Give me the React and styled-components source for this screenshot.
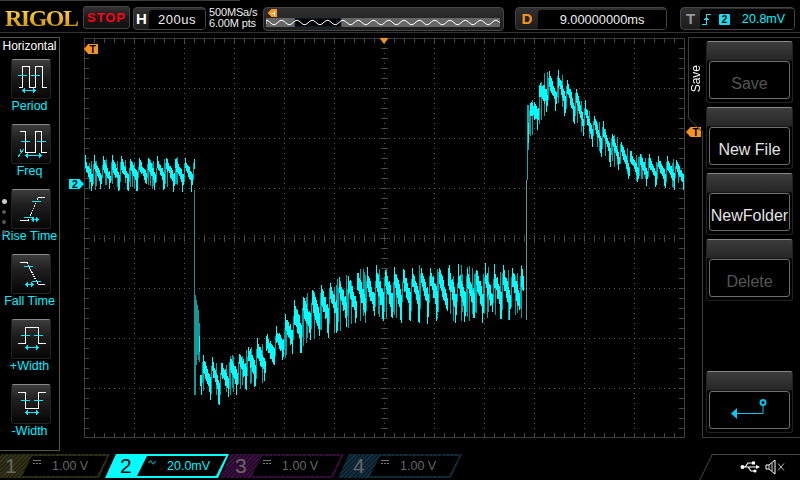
import React from "react";
import styled, { createGlobalStyle } from "styled-components";

const CYAN = "#00f0ff";
const ORANGE = "#f7941d";

const Global = createGlobalStyle`
  html, body { margin: 0; padding: 0; background: #000; }
  body { font-family: "Liberation Sans", Arial, sans-serif; }
`;

const Screen = styled.div`
  width: 800px; height: 480px; background: #000; overflow: hidden;
  display: flex; flex-direction: column; color: #fff;
`;

/* ---------- header ---------- */
const Header = styled.header`
  border-bottom: 1px solid #333; display: flex; align-items: flex-start; position: relative;
  padding-top: 7px; box-sizing: content-box; height: 25px; flex: none;
  &::before { content: ""; position: absolute; left: 0; top: 0; width: 240px; height: 1px; background: #3c3c3c; }
`;
const Logo = styled.div`
  width: 78px; margin-left: 5px; font: bold 24px/20px "Liberation Serif", serif; letter-spacing: -1.5px;
  background: linear-gradient(180deg, #ffd84a 0%, #eeb414 55%, #c49208 100%);
  -webkit-background-clip: text; background-clip: text; color: transparent; margin-top: 1px;
`;
const StopButton = styled.div`
  width: 47px; height: 23px; box-sizing: border-box; margin-top: -1px; border: 1px solid #444; border-radius: 3px;
  background: linear-gradient(180deg, #333 0%, #1a1a1a 50%, #111 100%);
  color: #ff0014; font: bold 13px/21px "Liberation Sans", sans-serif; letter-spacing: .9px; text-align: center;
`;
const Field = styled.div`
  height: 23px; box-sizing: border-box; width: ${p => p.$w}px; margin-left: ${p => p.$ml}px;
  border: 1px solid #444; border-radius: 4px; display: flex; overflow: hidden;
  background: linear-gradient(180deg, #303030 0%, #1c1c1c 100%);
`;
const FieldLetter = styled.span`
  width: ${p => p.$w}px; flex: none; text-align: center; color: ${p => p.$c};
  font: bold 15px/21px "Liberation Sans", sans-serif;
`;
const FieldValue = styled.div`
  flex: 1; background: #000; border-radius: 4px 0 0 0; margin-top: 2px; text-align: center; color: #eee;
  font: ${p => p.$fs || 13}px/20px "Liberation Sans", sans-serif; letter-spacing: ${p => p.$ls || 0}px;
`;
const Sample = styled.div`
  width: 49px; margin-left: 3px; font: 11px/11px "Liberation Sans", sans-serif; color: #eee; white-space: nowrap; letter-spacing: -.15px;
`;
const Timeline = styled.div`
  width: 241px; height: 24px; box-sizing: border-box; margin-left: 5px; border: 1px solid #444; border-radius: 4px;
  background: linear-gradient(180deg, #303030 0%, #1c1c1c 100%); padding: 1px 3px 0 2px; display: flex; flex-direction: column;
`;
const TimelineFlag = styled.svg` width: 10px; height: 8px; flex: none; margin-left: 1px; `;
const TimelineStrip = styled.svg` width: 234px; height: 9px; margin-top: 1px; flex: none; display: block; `;
const TriggerBody = styled.div`
  flex: 1; display: flex; align-items: center; background: #000; margin-top: 1px; border-radius: 4px 0 0 0; padding-left: 2px;
`;
const TriggerValue = styled.span`
  color: ${CYAN}; font: 12.5px/20px "Liberation Sans", sans-serif; margin-left: 12px;
`;
const SourceBadge = styled.span`
  width: 11px; height: 11px; background: #19dcf5; border-radius: 1px; color: #000; margin-left: 8px;
  font: bold 10px/11px "Liberation Sans", sans-serif; text-align: center;
`;

/* ---------- main ---------- */
const Main = styled.main` display: flex; flex: none; padding-top: 4px; box-sizing: border-box; height: 418px; `;

const LeftPanel = styled.aside`
  width: 60px; height: 414px; box-sizing: border-box; flex: none; border: 1px solid #555; border-left: 0;
  position: relative; display: flex; flex-direction: column; align-items: center; padding-left: 3px;
`;
const PanelTitle = styled.div` font: 12px/15px "Liberation Sans", sans-serif; color: #fff; margin-top: 1px; margin-left: -3px; height: 20px; white-space: nowrap;`;
const Measure = styled.div`
  display: flex; flex-direction: column; align-items: center; height: 65px; flex: none; width: 70px;
`;
const MeasureButton = styled.div`
  width: 40px; height: 40px; flex: none; box-sizing: border-box; border: 1px solid #222; border-top-color: #8a8a8a; border-radius: 3px;
  background: linear-gradient(180deg, #3c3c3c 0%, #1e1e1e 40%, #050505 100%);
  svg { display: block; margin: -1px; }
`;
const MeasureLabel = styled.div`
  font: 12.5px/16px "Liberation Sans", sans-serif; color: ${CYAN}; margin-top: -1px; white-space: nowrap; margin-left: -3px;
`;
const Pager = styled.div`
  position: absolute; left: 1.5px; top: 161px; display: flex; flex-direction: column; gap: 6px; align-items: center; width: 5px;
`;
const PagerDot = styled.span`
  width: ${p => (p.$on ? 5 : 4)}px; height: ${p => (p.$on ? 5 : 4)}px; border-radius: 50%; background: ${p => (p.$on ? "#ccc" : "#555")};
`;

const Plot = styled.div` position: relative; width: 601px; height: 401px; margin: 1px 0 0 24px; flex: none; `;
const PlotSvg = styled.svg` display: block; `;
const Flag = styled.div`
  position: absolute; left: ${p => p.$x}px; top: ${p => p.$y}px; width: ${p => p.$w}px; height: 10px;
  background: ${p => p.$c}; color: #000; font: bold 10.5px/10px "Liberation Sans", sans-serif;
  clip-path: ${p => (p.$dir === "right"
    ? "polygon(0 0, 70% 0, 100% 50%, 70% 100%, 0 100%)"
    : "polygon(0 50%, 30% 0, 100% 0, 100% 100%, 30% 100%)")};
  text-align: ${p => (p.$dir === "right" ? "left" : "right")};
  padding: ${p => (p.$dir === "right" ? "0 0 0 3px" : "0 2px 0 0")}; box-sizing: border-box;
`;
const TriggerPointer = styled.div`
  position: absolute; left: 295.5px; top: 0; width: 9px; height: 6px; background: ${ORANGE};
  clip-path: polygon(0 0, 100% 0, 50% 100%);
`;

const RightPanel = styled.aside`
  width: 112px; height: 401px; box-sizing: border-box; margin-left: 3px; flex: none; border-top: 1px solid #3c3c3c;
  display: flex;
`;
const SaveTab = styled.div`
  width: 14px; height: 80px; flex: none; box-sizing: border-box; border-left: 1px solid #3c3c3c; position: relative; padding-top: 27px;
  &::after {
    content: ""; position: absolute; left: -1px; top: 79px; width: 20px; height: 1px; background: #3c3c3c;
    transform-origin: 0 0; transform: rotate(45deg);
  }
`;
const SaveLabel = styled.div`
  writing-mode: vertical-rl; transform: rotate(180deg); font: 12px/14px "Liberation Sans", sans-serif; color: #fff;
`;
const MenuColumn = styled.div`
  flex: 1; display: flex; flex-direction: column; padding: 3px 0 0 4px; position: relative; border-bottom: 1px solid #3c3c3c;
  &::before { content: ""; position: absolute; left: 0; top: 93px; bottom: 0; width: 1px; background: #3c3c3c; }
`;
const MenuButton = styled.div`
  width: 87px; height: 62px; flex: none; box-sizing: border-box; margin-top: ${p => p.$mt || 0}px; margin-bottom: 4px;
  border: 1px solid #222; border-top-color: #888; border-radius: 3px; padding: 19px 2px 0 2px;
  background: linear-gradient(180deg, #3c3c3c 0%, #262626 30%, #000 32%);
`;
const MenuFace = styled.div`
  height: 38px; box-sizing: border-box; border: 1px solid #6e6e6e; border-radius: 3px; background: #000;
  display: flex; align-items: center; justify-content: center; white-space: nowrap;
  padding-top: ${p => (p.$icon ? 0 : 7)}px;
  font: 16px/20px "Liberation Sans", sans-serif; color: ${p => (p.$off ? "#555" : "#e4e4e4")};
`;

/* ---------- footer ---------- */
const Footer = styled.footer` height: 26px; flex: none; margin-top: 3px; display: flex; position: relative; `;
const Channel = styled.div`
  height: 24px; width: ${p => p.$w || 124}px; flex: none; margin-left: ${p => p.$ml}px; box-sizing: border-box; display: flex; padding: 2px 3px 2px 0;
  clip-path: polygon(11px 0, 100% 0, calc(100% - 11px) 100%, 0 100%);
  background: ${p => (p.$active ? p.$c : `repeating-linear-gradient(135deg, ${p.$c} 0 1.5px, ${p.$c2} 1.5px 3px)`)};
`;
const ChannelNumber = styled.div`
  width: 32px; flex: none; padding-left: 15px; box-sizing: border-box; color: ${p => (p.$active ? "#000" : "#666")};
  font: 21px/20px "Liberation Sans", sans-serif;
`;
const ChannelFace = styled.div`
  flex: 1; background: #000; display: flex; align-items: center; padding-left: 11px;
  clip-path: polygon(10px 0, 100% 0, calc(100% - 10px) 100%, 0 100%);
  font: 12.5px/20px "Liberation Sans", sans-serif; color: ${p => (p.$active ? CYAN : "#666")};
  svg { flex: none; margin-right: 11px; margin-top: -7px; }
`;
const StatusCorner = styled.div`
  margin-left: auto; width: 88px; height: 26px; position: relative; display: flex; align-items: center; padding-left: 28px; box-sizing: border-box; gap: 5px;
  &::before {
    content: ""; position: absolute; left: 0; top: 0; width: 100px; height: 30px; border-top: 1px solid #444; border-left: 1px solid #444;
    transform-origin: 0 0; transform: skewX(-26deg);
  }
`;

/* ---------- data ---------- */
const KEYS = [[84,157,190],[194,157,190],[200,353,398],[220,360,403],[240,350,392],[260,338,387],[280,323,363],[290,303,360],[310,288,343],[330,280,337],[360,268,325],[380,265,322],[524,265,322],[528,105,145],[545,70,115],[560,70,110],[575,85,125],[590,110,145],[610,130,165],[630,150,182],[650,155,185],[684,160,190]];
const env = x => {
  for (let i = 0; i < KEYS.length - 1; i++) {
    const [a, t1, b1] = KEYS[i], [c, t2, b2] = KEYS[i + 1];
    if (x >= a && x <= c) { const k = (x - a) / (c - a); return [t1 + (t2 - t1) * k, b1 + (b2 - b1) * k]; }
  }
  return [160, 190];
};
let seed = 23;
const rnd = () => { seed = (seed * 16807) % 2147483647; return seed / 2147483647; };
const buildWave = () => {
  let bright = "", dim = "";
  const P = 9.1;
  for (let x = 85; x < 684; x++) {
    if ((x >= 195 && x < 199) || (x >= 524 && x < 528)) continue;
    const [t, b] = env(x);
    const h = b - t;
    const phase = ((x - 84) % P) / P;
    const pos = t + h * (0.18 + 0.58 * phase);
    const half = h * (0.1 + rnd() * 0.11);
    let y1 = pos - half, y2 = pos + half;
    if (phase < 0.12) y1 = t + rnd() * h * 0.14 - 2;
    if (phase > 0.68 && phase < 0.86 && rnd() > 0.25) y2 = b - rnd() * h * 0.12 + 2;
    if (phase >= 0.9) {
      dim += `M${x + .5} ${(t + h * (.12 + rnd() * .2)).toFixed(0)}V${(b - h * (.16 + rnd() * .2)).toFixed(0)}`;
      continue;
    }
    if (rnd() > 0.8) dim += `M${x + .5} ${(t + h * rnd() * .2).toFixed(0)}V${(b - h * rnd() * .2).toFixed(0)}`;
    bright += `M${x + .5} ${y1.toFixed(0)}V${y2.toFixed(0)}`;
  }
  return { bright, dim };
};
const WAVE = buildWave();

const buildGrid = () => {
  let ticks = "", dots = "";
  for (let i = 1; i < 60; i++) {
    const x = 84 + i * 10;
    ticks += `M${x + .5} 38V43M${x + .5} 438V433`;
    ticks += `M${x + .5} ${235}V${242}`;
  }
  for (let i = 1; i < 40; i++) {
    const y = 38 + i * 10;
    ticks += `M84 ${y + .5}H89M684 ${y + .5}H679M381 ${y + .5}H388`;
  }
  for (let i = 1; i < 12; i++) dots += `M${84 + i * 50 + .5} 38V438`;
  for (let i = 1; i < 8; i++) dots += `M84 ${38 + i * 50 + .5}H684`;
  return { ticks, dots };
};
const GRID = buildGrid();

const sineStrip = () => {
  let d = "M0 6";
  for (let x = 0; x <= 234; x += 1) d += `L${x} ${(4.5 + 2.2 * Math.cos((x - 8) / 15.3 * 2 * Math.PI)).toFixed(2)}`;
  return d;
};

/* ---------- icons ---------- */
const DoubleArrow = ({ x1, x2, y }) => (
  <>
    <path d={`M${x1 + 1} ${y}H${x2 - 1}`} stroke={CYAN} strokeWidth="1" fill="none" />
    <path d={`M${x1} ${y}l3 -3v6zM${x2} ${y}l-3 -3v6z`} fill={CYAN} />
  </>
);
const Tick = ({ x, y }) => <path d={`M${x - 4.5} ${y}H${x + 4.5}`} stroke={CYAN} strokeWidth="1" />;
const Glyph = ({ children }) => (
  <svg width="40" height="40" viewBox="0 0 40 40" fill="none" shapeRendering="crispEdges">{children}</svg>
);
const W = ({ d, dash }) => <path d={d} stroke="#fff" strokeWidth="1" fill="none" strokeDasharray={dash} />;

const ICONS = {
  Period: <Glyph><W d="M7.5 28.5H11.5V7.5H18.5V28.5H24.5V7.5H31.5V28.5H35.5" /><Tick x={11} y={16.5} /><Tick x={24} y={16.5} /><DoubleArrow x1={11} x2={25} y={31.5} /></Glyph>,
  Freq: <Glyph><W d="M9 7.5H14.5V28.5H24.5V7.5H30.5V28.5H35.5" /><Tick x={14} y={17.5} /><Tick x={30} y={17.5} /><DoubleArrow x1={14} x2={31} y={31.5} /><path d="M9 24.5V28M7 33L13 25" stroke={CYAN} /></Glyph>,
  "Rise Time": <Glyph><W d="M9 31.5H17" /><W d="M17 31.5L27 8.5" dash="1.5 1" /><W d="M27 8.5H34" /><Tick x={25} y={12.5} /><Tick x={17} y={28.5} /><DoubleArrow x1={20} x2={28} y={30.5} /></Glyph>,
  "Fall Time": <Glyph><W d="M9 8.5H16" /><W d="M16 8.5L27 30.5" dash="1.5 1" /><W d="M27 30.5H34" /><Tick x={17} y={12.5} /><Tick x={25} y={27.5} /><DoubleArrow x1={14} x2={23} y={30.5} /></Glyph>,
  "+Width": <Glyph><W d="M7 24.5H14.5V8.5H27.5V24.5H35" /><Tick x={14} y={16.5} /><Tick x={27} y={16.5} /><DoubleArrow x1={14} x2={28} y={28.5} /></Glyph>,
  "-Width": <Glyph><W d="M7 8.5H14.5V24.5H27.5V8.5H35" /><Tick x={14} y={16.5} /><Tick x={27} y={16.5} /><DoubleArrow x1={14} x2={28} y={28.5} /></Glyph>,
};
const MEASURES = ["Period", "Freq", "Rise Time", "Fall Time", "+Width", "-Width"];

const DcIcon = () => (
  <svg width="8" height="5" viewBox="0 0 8 5" shapeRendering="crispEdges">
    <path d="M0 .5H8" stroke="#777" /><path d="M0 3.5H8" stroke="#777" strokeDasharray="2 1" />
  </svg>
);
const AcIcon = () => (
  <svg width="8" height="5" viewBox="0 0 8 5">
    <path d="M.5 3C2 .5 3 .5 4 2.5S6 4.5 7.5 1.5" stroke={CYAN} fill="none" />
  </svg>
);

const ChannelTab = ({ n, value, c, c2, active, ml, w, coupling }) => (
  <Channel $c={c} $c2={c2} $active={active} $ml={ml} $w={w}>
    <ChannelNumber $active={active}>{n}</ChannelNumber>
    <ChannelFace $active={active}>{coupling}{value}</ChannelFace>
  </Channel>
);

export default function App() {
  return (
    <Screen>
      <Global />
      <Header>
        <Logo>RIGOL</Logo>
        <StopButton>STOP</StopButton>
        <Field $w={73} $ml={3}>
          <FieldLetter $w={15} $c="#fff">H</FieldLetter>
          <FieldValue $ls={.5}>200us</FieldValue>
        </Field>
        <Sample>500MSa/s<br />6.00M pts</Sample>
        <Timeline>
          <TimelineFlag viewBox="0 0 10 8" shapeRendering="crispEdges">
            <path d="M0 4L4 0H10V8H4Z" fill={ORANGE} />
            <path d="M4 4H8M7.5 1.5V6.5" stroke="#fff" fill="none" />
          </TimelineFlag>
          <TimelineStrip viewBox="0 0 234 9">
            <rect width="234" height="9" fill="#666" />
            <rect x="29" width="46" height="9" fill="#000" stroke="#135" />
            <path d={sineStrip()} fill="none" stroke="#fff" strokeWidth="1" />
          </TimelineStrip>
        </Timeline>
        <Field $w={152} $ml={11}>
          <FieldLetter $w={22} $c={ORANGE}>D</FieldLetter>
          <FieldValue $fs={12.8}>9.00000000ms</FieldValue>
        </Field>
        <Field $w={115} $ml={13}>
          <FieldLetter $w={19} $c="#999">T</FieldLetter>
          <TriggerBody>
            <svg width="9" height="11" viewBox="0 0 9 11" shapeRendering="crispEdges">
              <path d="M0 10.5H4.5V.5H9" stroke="#19dcf5" fill="none" />
              <path d="M2 6L4.5 2.5L7 6Z" fill="#19dcf5" />
            </svg>
            <SourceBadge>2</SourceBadge>
            <TriggerValue>20.8mV</TriggerValue>
          </TriggerBody>
        </Field>
      </Header>

      <Main>
        <LeftPanel>
          <PanelTitle>Horizontal</PanelTitle>
          {MEASURES.map(m => (
            <Measure key={m}>
              <MeasureButton>{ICONS[m]}</MeasureButton>
              <MeasureLabel>{m}</MeasureLabel>
            </Measure>
          ))}
          <Pager>
            <PagerDot $on /><PagerDot /><PagerDot /><PagerDot />
          </Pager>
        </LeftPanel>

        <Plot>
          <PlotSvg width="601" height="401" viewBox="84 38 601 401" shapeRendering="crispEdges">
            <rect x="84.5" y="38.5" width="600" height="399" fill="none" stroke="#3c3c3c" />
            <path d={GRID.ticks} stroke="#444" fill="none" />
            <path d={GRID.dots} stroke="#5a5a5a" strokeDasharray="1 4" fill="none" />
            <path d="M194.5 190V395" stroke="#2a8a8a" />
            <path d="M195.5 295V395M196.5 300V365M197.5 305V355M198.5 310V360" stroke="#0c9c9c" />
            <path d="M526.5 180V320" stroke="#5a9a9a" />
            <path d="M527.5 105V180M528.5 105V150" stroke="#0caaaa" />
            <path d={WAVE.dim} stroke="#0aa0a0" fill="none" />
            <path d={WAVE.bright} stroke="#00ffff" fill="none" />
          </PlotSvg>
          <Flag $x={0} $y={6} $w={14} $c={ORANGE}>T</Flag>
          <TriggerPointer />
          <Flag $x={-15} $y={141} $w={15} $c={CYAN} $dir="right">2</Flag>
          <Flag $x={602} $y={89} $w={15} $c={ORANGE}>T</Flag>
        </Plot>

        <RightPanel>
          <SaveTab><SaveLabel>Save</SaveLabel></SaveTab>
          <MenuColumn>
            <MenuButton><MenuFace $off>Save</MenuFace></MenuButton>
            <MenuButton><MenuFace>New File</MenuFace></MenuButton>
            <MenuButton><MenuFace>NewFolder</MenuFace></MenuButton>
            <MenuButton><MenuFace $off>Delete</MenuFace></MenuButton>
            <MenuButton $mt={66}>
              <MenuFace $icon>
                <svg width="40" height="24" viewBox="0 0 40 24">
                  <circle cx="33" cy="4.5" r="2.5" fill="#000" stroke="#00c8f5" strokeWidth="2" />
                  <path d="M33 7V15.5H7" stroke="#00c8f5" fill="none" />
                  <path d="M1 15.5L7 10V21Z" fill="#00c8f5" />
                </svg>
              </MenuFace>
            </MenuButton>
          </MenuColumn>
        </RightPanel>
      </Main>

      <Footer>
        <ChannelTab n="1" value="1.00 V" c="#33331a" c2="#22220f" ml={-10} w={120} coupling={<DcIcon />} />
        <ChannelTab n="2" value="20.0mV" c="#00ffff" active ml={-5} coupling={<AcIcon />} />
        <ChannelTab n="3" value="1.00 V" c="#3a1040" c2="#24082a" ml={-9} coupling={<DcIcon />} />
        <ChannelTab n="4" value="1.00 V" c="#12303f" c2="#0a1c28" ml={-6} coupling={<DcIcon />} />
        <StatusCorner>
          <svg width="20" height="12" viewBox="0 0 20 12">
            <path d="M2 6H17M5 6L8 2H12M8 6L11 10H14" stroke="#fff" strokeWidth="1.2" fill="none" />
            <circle cx="2.5" cy="6" r="2" fill="#fff" />
            <path d="M16 4L20 6L16 8Z" fill="#fff" />
            <rect x="12" y="0.5" width="3" height="3" fill="#fff" />
            <circle cx="15" cy="10" r="1.6" fill="#fff" />
          </svg>
          <svg width="20" height="16" viewBox="0 0 20 16">
            <path d="M1 6V10H4L10 15V1L4 6Z" stroke="#fff" fill="none" />
            <path d="M4 6V10M7 4V12" stroke="#fff" strokeWidth=".8" />
            <path d="M13 4.5L19 11.5M19 4.5L13 11.5" stroke="#ccc" strokeWidth=".9" />
          </svg>
        </StatusCorner>
      </Footer>
    </Screen>
  );
}
